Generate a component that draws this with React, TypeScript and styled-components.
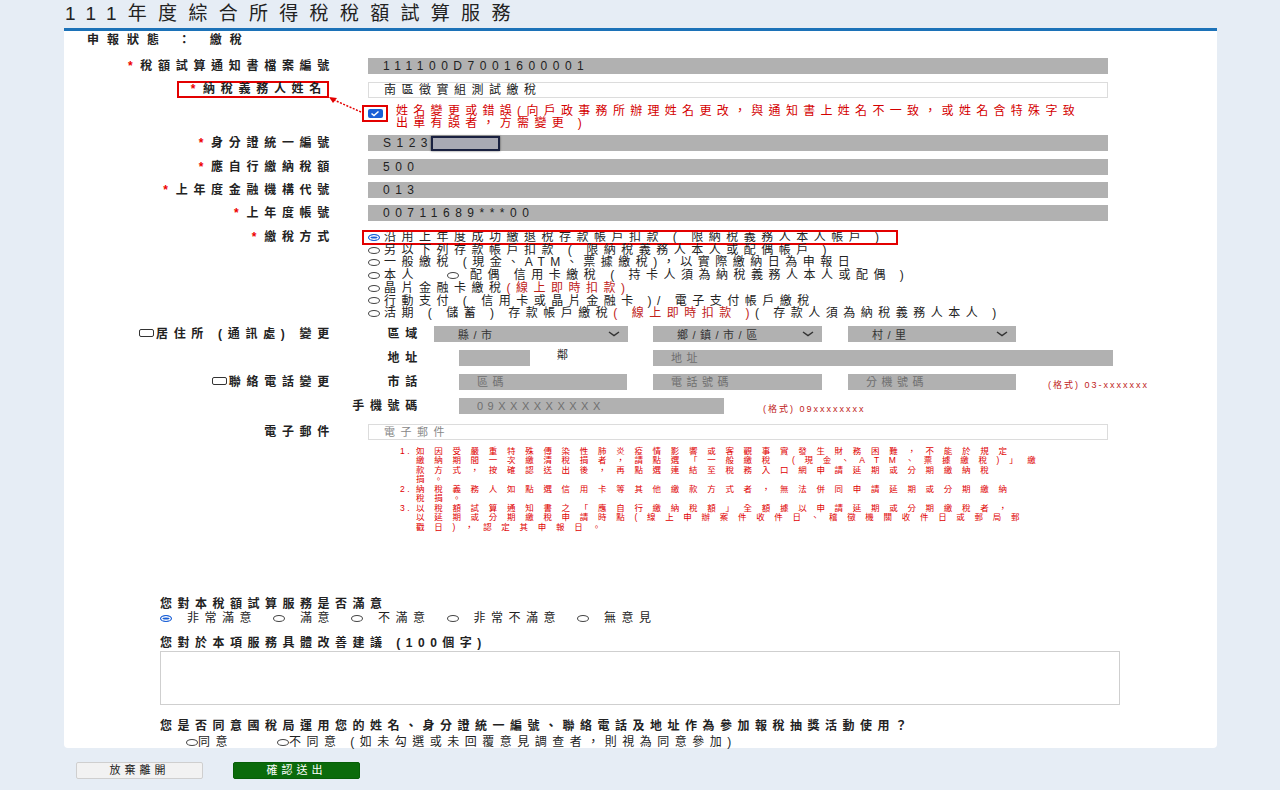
import React from "react";
import styled, { createGlobalStyle } from "styled-components";

const GlobalStyle = createGlobalStyle`
  * { box-sizing: border-box; }
  html, body { margin: 0; padding: 0; background: #e6edf5; }
  body {
    font-family: "Liberation Sans", "Noto Sans CJK TC", sans-serif;
    font-size: 12px;
    color: #222;
  }
`;

const Page = styled.div`
  width: 1280px;
  height: 790px;
  overflow: hidden;
  padding: 4px 63px 0 64px;
`;

const Title = styled.h1`
  margin: 0 0 4px 1px;
  font-size: 19px;
  line-height: 20px;
  font-weight: normal;
  letter-spacing: 11.3px;
  color: #222;
  white-space: nowrap;
`;

const Card = styled.div`
  background: #fff;
  border-top: 3px solid #1c72b8;
  border-radius: 0 0 4px 4px;
  padding: 3px 0 0;
`;

const Status = styled.div`
  margin-left: 23px;
  line-height: 12px;
  font-weight: bold;
  letter-spacing: 8px;
`;

const Row = styled.div<{ $mt: number; $top?: boolean }>`
  position: relative;
  display: grid;
  grid-template-columns: 271px 740px;
  column-gap: 33px;
  align-items: ${(p) => (p.$top ? "start" : "center")};
  margin-top: ${(p) => p.$mt}px;
`;

const Label = styled.div<{ $lh?: number }>`
  text-align: right;
  font-weight: bold;
  letter-spacing: 5.7px;
  line-height: ${(p) => p.$lh || 16}px;
  white-space: nowrap;
`;

const Star = styled.span`
  color: #e00;
  margin-right: 2px;
`;

const NameBox = styled.span`
  display: inline-block;
  border: 2px solid #e30000;
  padding: 0 0 0 12px;
  margin-right: 6px;
  line-height: 13px;
`;

const Field = styled.div<{ $white?: boolean }>`
  height: 16px;
  line-height: 16px;
  padding-left: 15px;
  background: ${(p) => (p.$white ? "#fff" : "#b1b1b1")};
  border: ${(p) => (p.$white ? "1px solid #dcdcdc" : "none")};
  letter-spacing: 5.5px;
  white-space: nowrap;
  display: flex;
  align-items: center;
`;

const Mask = styled.span`
  display: inline-block;
  width: 69px;
  height: 15px;
  margin-left: -2px;
  border: 2px solid #1a2140;
  background: #a9aab4;
  box-shadow: 0 0 2px rgba(0, 0, 0, 0.6);
`;

const CheckLine = styled.div`
  display: flex;
  align-items: flex-start;
  gap: 8px;
  margin-left: -6px;
`;

const CheckFrame = styled.span`
  flex: none;
  width: 26px;
  height: 17px;
  border: 2px solid #e30000;
  display: flex;
  align-items: center;
  justify-content: center;
`;

const BlueCheck = styled.span`
  width: 15px;
  height: 9px;
  border-radius: 2px;
  background: #1a5fd6;
  display: flex;
  align-items: center;
  justify-content: center;
`;

const RedNote = styled.div`
  color: #d40000;
  line-height: 12px;
  letter-spacing: 5.3px;
  white-space: nowrap;
`;

const Pointer = styled.svg`
  position: absolute;
  left: 264px;
  top: -10px;
`;

const Options = styled.div`
  display: flex;
  flex-direction: column;
`;

const Option = styled.div<{ $boxed?: boolean }>`
  display: flex;
  align-items: center;
  width: fit-content;
  line-height: 12.7px;
  letter-spacing: 5.5px;
  white-space: nowrap;
  ${(p) =>
    p.$boxed
      ? "margin-left: -5px; padding: 0 12px 0 5px; outline: 2px solid #e30000; outline-offset: -1px;"
      : ""}
`;

const Radio = styled.span<{ $on?: boolean; $ml?: number; $mr?: number }>`
  display: inline-block;
  flex: none;
  width: 12px;
  height: 7px;
  margin: 0 ${(p) => (p.$mr === undefined ? 4 : p.$mr)}px 0 ${(p) => p.$ml || 0}px;
  border-radius: 50%;
  border: 1px solid ${(p) => (p.$on ? "#1a5fd6" : "#444")};
  background: ${(p) => (p.$on ? "#1a5fd6" : "#fff")};
  box-shadow: ${(p) => (p.$on ? "inset 0 0 0 1.5px #fff" : "none")};
`;

const Red = styled.span`
  color: #c0221a;
`;

const AddrRow = styled.div<{ $mt: number }>`
  display: grid;
  grid-template-columns: 271px 88px 1fr;
  align-items: center;
  margin-top: ${(p) => p.$mt}px;
`;

const Box = styled.span`
  display: inline-block;
  width: 15px;
  height: 8px;
  margin-right: 2px;
  border: 1px solid #333;
  border-radius: 2px;
  vertical-align: 1px;
`;

const Fields = styled.div`
  display: flex;
  align-items: center;
  height: 16px;
`;

const Select = styled.div<{ $w: number; $ml: number }>`
  flex: none;
  width: ${(p) => p.$w}px;
  height: 16px;
  margin-left: ${(p) => p.$ml}px;
  padding: 0 8px 0 24px;
  background: #b1b1b1;
  display: flex;
  align-items: center;
  justify-content: space-between;
  font-size: 11px;
  letter-spacing: 4.5px;
  color: #333;
`;

const Input = styled.input<{ $w: number; $ml: number }>`
  flex: none;
  width: ${(p) => p.$w}px;
  height: 16px;
  margin: 0 0 0 ${(p) => p.$ml}px;
  padding: 0 0 0 18px;
  border: none;
  background: #b1b1b1;
  font: inherit;
  font-size: 11px;
  letter-spacing: 4.5px;
  color: #333;
  &::placeholder {
    color: #6f6f6f;
    opacity: 1;
  }
`;

const EmailInput = styled.input`
  width: 740px;
  height: 16px;
  margin: 0;
  padding: 0 0 0 15px;
  border: 1px solid #dcdcdc;
  background: #fff;
  font: inherit;
  font-size: 11px;
  letter-spacing: 5.5px;
  &::placeholder {
    color: #888;
    opacity: 1;
  }
`;

const Neighbor = styled.span`
  flex: none;
  width: 96px;
  margin-left: 27px;
  align-self: flex-start;
  margin-top: -4px;
  font-size: 11px;
  letter-spacing: 3px;
`;

const Hint = styled.span<{ $ml: number }>`
  flex: none;
  margin: 6px 0 0 ${(p) => p.$ml}px;
  color: #c0221a;
  font-size: 9px;
  letter-spacing: 2px;
  white-space: nowrap;
`;

const Notes = styled.ol`
  margin: 7px 0 0 336px;
  padding: 0;
  list-style: none;
  color: #e00000;
  font-size: 8.5px;
  line-height: 9.5px;
`;

const Note = styled.li`
  display: flex;
`;

const NoteNo = styled.span`
  flex: none;
  width: 16px;
  letter-spacing: 2.5px;
`;

const NoteText = styled.span`
  letter-spacing: 9.7px;
  white-space: nowrap;
`;

const Survey = styled.div`
  margin: 65px 0 0 96px;
`;

const Question = styled.div<{ $mt: number }>`
  margin-top: ${(p) => p.$mt}px;
  line-height: 14px;
  font-weight: bold;
  letter-spacing: 5.5px;
  white-space: nowrap;
`;

const Choices = styled.div<{ $mt?: number; $lh?: number; $ml?: number }>`
  display: flex;
  align-items: center;
  margin: ${(p) => p.$mt || 0}px 0 0 ${(p) => p.$ml || 0}px;
  line-height: ${(p) => p.$lh || 14}px;
  letter-spacing: 5.5px;
  white-space: nowrap;
`;

const Choice = styled.span<{ $gap?: number; $ml?: number }>`
  display: flex;
  align-items: center;
  margin-left: ${(p) => p.$ml || 0}px;
  & > span:first-child {
    margin-right: ${(p) => (p.$gap === undefined ? 15 : p.$gap)}px;
  }
`;

const TextArea = styled.textarea`
  display: block;
  width: 960px;
  height: 54px;
  margin-top: 1px;
  border: 1px solid #cfcfcf;
  resize: none;
  font: inherit;
`;

const ButtonBar = styled.div`
  display: flex;
  gap: 30px;
  margin: 14px 0 0 12px;
`;

const Button = styled.button<{ $primary?: boolean }>`
  width: 127px;
  height: 17px;
  padding: 0;
  border: 1px solid ${(p) => (p.$primary ? "#075e07" : "#cfcfcf")};
  border-radius: 2px;
  background: ${(p) => (p.$primary ? "#0b6b0b" : "#f2f2f2")};
  color: ${(p) => (p.$primary ? "#fff" : "#222")};
  font-family: "Liberation Serif", "Noto Sans CJK TC", serif;
  font-size: 11px;
  letter-spacing: 4px;
  line-height: 15px;
`;

const Chevron = () => (
  <svg width="12" height="6" viewBox="0 0 12 6">
    <polyline points="1,1 6,4.5 11,1" fill="none" stroke="#333" strokeWidth="1.5" />
  </svg>
);

export default function App() {
  return (
    <>
      <GlobalStyle />
      <Page>
        <Title>111年度綜合所得稅稅額試算服務</Title>
        <Card>
          <Status>申報狀態 ： 繳稅</Status>

          <Row $mt={12}>
            <Label>
              <Star>*</Star>稅額試算通知書檔案編號
            </Label>
            <Field>111100D7001600001</Field>
          </Row>

          <Row $mt={7}>
            <Label>
              <NameBox>
                <Star>*</Star>納稅義務人姓名
              </NameBox>
            </Label>
            <Field $white>南區徵實組測試繳稅</Field>
          </Row>

          <Row $mt={7} $top>
            <span />
            <CheckLine>
              <CheckFrame>
                <BlueCheck>
                  <svg width="10" height="7" viewBox="0 0 10 7">
                    <polyline points="1.5,3.5 4,5.5 8.5,1.5" fill="none" stroke="#fff" strokeWidth="1.5" />
                  </svg>
                </BlueCheck>
              </CheckFrame>
              <RedNote>
                姓名變更或錯誤(向戶政事務所辦理姓名更改，與通知書上姓名不一致，或姓名含特殊字致
                <br />
                出單有誤者，方需變更 )
              </RedNote>
            </CheckLine>
            <Pointer width="34" height="20" viewBox="0 0 34 20">
              <line x1="33" y1="17" x2="6" y2="5" stroke="#e30000" strokeWidth="1.5" strokeDasharray="2 1.5" />
              <polygon points="1,2 9,3 5,8" fill="#e30000" />
            </Pointer>
          </Row>

          <Row $mt={6}>
            <Label>
              <Star>*</Star>身分證統一編號
            </Label>
            <Field>
              S123
              <Mask />
            </Field>
          </Row>

          <Row $mt={8}>
            <Label>
              <Star>*</Star>應自行繳納稅額
            </Label>
            <Field>500</Field>
          </Row>

          <Row $mt={7}>
            <Label>
              <Star>*</Star>上年度金融機構代號
            </Label>
            <Field>013</Field>
          </Row>

          <Row $mt={7}>
            <Label>
              <Star>*</Star>上年度帳號
            </Label>
            <Field>00711689***00</Field>
          </Row>

          <Row $mt={10} $top>
            <Label $lh={12.7}>
              <Star>*</Star>繳稅方式
            </Label>
            <Options>
              <Option $boxed>
                <Radio $on />
                沿用上年度成功繳退稅存款帳戶扣款 ( 限納稅義務人本人帳戶 )
              </Option>
              <Option>
                <Radio />
                另以下列存款帳戶扣款 ( 限納稅義務人本人或配偶帳戶 )
              </Option>
              <Option>
                <Radio />
                一般繳稅 (現金、ATM、票據繳稅)，以實際繳納日為申報日
              </Option>
              <Option>
                <Radio />
                本人
                <Radio $ml={28} $mr={11} />
                配偶 信用卡繳稅 ( 持卡人須為納稅義務人本人或配偶 )
              </Option>
              <Option>
                <Radio />
                晶片金融卡繳稅<Red>(線上即時扣款)</Red>
              </Option>
              <Option>
                <Radio />
                行動支付 ( 信用卡或晶片金融卡 )/ 電子支付帳戶繳稅
              </Option>
              <Option>
                <Radio />
                活期 ( 儲蓄 ) 存款帳戶繳稅 <Red>( 線上即時扣款 )</Red> ( 存款人須為納稅義務人本人 )
              </Option>
            </Options>
          </Row>

          <AddrRow $mt={6}>
            <Label>
              <Box />
              居住所 (通訊處) 變更
            </Label>
            <Label>區域</Label>
            <Fields>
              <Select $w={194} $ml={11}>
                縣/市
                <Chevron />
              </Select>
              <Select $w={169} $ml={25}>
                鄉/鎮/市/區
                <Chevron />
              </Select>
              <Select $w={168} $ml={26}>
                村/里
                <Chevron />
              </Select>
            </Fields>
          </AddrRow>

          <AddrRow $mt={8}>
            <span />
            <Label>地址</Label>
            <Fields>
              <Input $w={71} $ml={36} />
              <Neighbor>鄰</Neighbor>
              <Input $w={460} $ml={0} placeholder="地址" />
            </Fields>
          </AddrRow>

          <AddrRow $mt={8}>
            <Label>
              <Box />
              聯絡電話變更
            </Label>
            <Label>市話</Label>
            <Fields>
              <Input $w={168} $ml={36} placeholder="區碼" />
              <Input $w={169} $ml={26} placeholder="電話號碼" />
              <Input $w={168} $ml={26} placeholder="分機號碼" />
              <Hint $ml={32}>(格式) 03-xxxxxxx</Hint>
            </Fields>
          </AddrRow>

          <AddrRow $mt={8}>
            <span />
            <Label>手機號碼</Label>
            <Fields>
              <Input $w={265} $ml={36} placeholder="09XXXXXXXXX" />
              <Hint $ml={39}>(格式) 09xxxxxxxx</Hint>
            </Fields>
          </AddrRow>

          <Row $mt={10}>
            <Label>電子郵件</Label>
            <EmailInput placeholder="電子郵件" />
          </Row>

          <Notes>
            <Note>
              <NoteNo>1.</NoteNo>
              <NoteText>
                如因受嚴重特殊傳染性肺炎疫情影響或客觀事實發生財務困難，不能於規定
                <br />
                繳納期間一次繳清稅捐者，請點選「一般繳稅 (現金、ATM、票據繳稅)」繳
                <br />
                款方式，按確認送出後，再點選連結至稅務入口網申請延期或分期繳納稅
                <br />
                捐。
              </NoteText>
            </Note>
            <Note>
              <NoteNo>2.</NoteNo>
              <NoteText>
                納稅義務人如點選信用卡等其他繳款方式者，無法併同申請延期或分期繳納
                <br />
                稅捐。
              </NoteText>
            </Note>
            <Note>
              <NoteNo>3.</NoteNo>
              <NoteText>
                以稅額試算通知書之「應自行繳納稅額」全額據以申請延期或分期繳稅者，
                <br />
                以延期或分期繳稅申請時點(線上申辦案件收件日、稽徵機關收件日或郵局郵
                <br />
                戳日)，認定其申報日。
              </NoteText>
            </Note>
          </Notes>

          <Survey>
            <Question $mt={0}>您對本稅額試算服務是否滿意</Question>
            <Choices>
              <Choice>
                <Radio $on />
                非常滿意
              </Choice>
              <Choice $ml={16}>
                <Radio />
                滿意
              </Choice>
              <Choice $ml={16}>
                <Radio />
                不滿意
              </Choice>
              <Choice $ml={16}>
                <Radio />
                非常不滿意
              </Choice>
              <Choice $ml={16}>
                <Radio />
                無意見
              </Choice>
            </Choices>

            <Question $mt={11}>您對於本項服務具體改善建議 (100個字)</Question>
            <TextArea />

            <Question $mt={14}>
              您是否同意國稅局運用您的姓名、身分證統一編號、聯絡電話及地址作為參加報稅抽獎活動使用？
            </Question>
            <Choices $mt={3} $lh={12} $ml={26}>
              <Choice $gap={0}>
                <Radio />
                同意
              </Choice>
              <Choice $gap={0} $ml={44}>
                <Radio />
                不同意 (如未勾選或未回覆意見調查者，則視為同意參加)
              </Choice>
            </Choices>
          </Survey>
        </Card>

        <ButtonBar>
          <Button>放棄離開</Button>
          <Button $primary>確認送出</Button>
        </ButtonBar>
      </Page>
    </>
  );
}
